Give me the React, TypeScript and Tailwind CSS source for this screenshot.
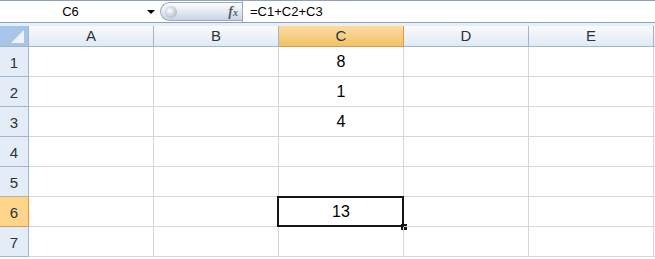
import React from "react";

const cols = ["A", "B", "C", "D", "E"];
const rows = [1, 2, 3, 4, 5, 6, 7];
const values: Record<string, string> = { C1: "8", C2: "1", C3: "4", C6: "13" };

function FormulaBar() {
  return (
    <div className="flex h-[23px] border-t border-b border-[#8ea2bd] bg-white">
      <div className="relative flex w-[156px] items-center">
        <span className="w-[140px] pl-[1px] text-center text-[13px] text-black">C6</span>
        <span className="absolute left-[147px] top-[9px] h-0 w-0 border-x-[4px] border-t-[4px] border-x-transparent border-t-black" />
      </div>
      <div className="relative my-[1px] ml-[4px] flex w-[82px] items-center justify-end rounded-l-full border border-r-0 border-[#9aaac2] bg-gradient-to-b from-[#fbfcfe] via-[#e3e9f3] to-[#c8d4e6] pr-[4px]">
        <span className="absolute left-[4px] top-[3px] h-[12px] w-[12px] rounded-full bg-[radial-gradient(circle_at_40%_40%,#ffffff,#b9bfc9_70%)]" />
        <span className="font-['Liberation_Serif',serif] text-[14px] font-bold italic leading-none text-[#555d68]">
          f<span className="text-[10px]">x</span>
        </span>
      </div>
      <div className="flex flex-1 items-center border-l border-[#9aaac2] pl-[7px] text-[13px] text-black">=C1+C2+C3</div>
    </div>
  );
}

export default function App() {
  return (
    <div className="h-[259px] w-[655px] overflow-hidden bg-white font-['Liberation_Sans',Arial,sans-serif]">
      <FormulaBar />
      <div className="h-[3px] bg-[#e8eef6]" />
      <div className="grid grid-cols-[29px_repeat(5,125px)_1fr] grid-rows-[21px_repeat(7,30px)]">
        <div className="relative border-r border-b border-[#9eb6ce] bg-[#a9c4e9]">
          <div className="absolute bottom-[3px] right-[4px] h-0 w-0 border-b-[13px] border-l-[13px] border-b-[#eef3fa] border-l-transparent" />
        </div>
        {cols.map((c) =>
          c === "C" ? (
            <div
              key={c}
              className="flex items-center justify-center border-r border-b border-[#f29536] bg-gradient-to-b from-[#f9dba4] to-[#f2c366] text-[15px] text-[#27353f]"
            >
              {c}
            </div>
          ) : (
            <div
              key={c}
              className="flex items-center justify-center border-r border-b border-[#9eb6ce] bg-gradient-to-b from-[#f9fbfd] to-[#e1e9f4] text-[15px] text-[#27353f]"
            >
              {c}
            </div>
          )
        )}
        <div className="border-b border-[#9eb6ce] bg-gradient-to-b from-[#f9fbfd] to-[#e1e9f4]" />
        {rows.map((r) => (
          <React.Fragment key={r}>
            {r === 6 ? (
              <div className="flex items-end justify-center border-r border-b border-[#f29536] bg-[#ffd58b] pb-[2px] text-[15px] text-[#27353f]">
                {r}
              </div>
            ) : (
              <div className="flex items-end justify-center border-r border-b border-[#9eb6ce] bg-[#e4ecf7] pb-[2px] text-[15px] text-[#27353f]">
                {r}
              </div>
            )}
            {cols.map((c) => (
              <div
                key={c + r}
                className="relative flex items-center justify-center border-r border-b border-[#d0d7e5] text-[16px] text-black"
              >
                {values[c + r] ?? ""}
                {c === "C" && r === 6 && (
                  <>
                    <div className="absolute -left-[2px] -top-[1px] -right-[1px] -bottom-[1px] border-2 border-[#151515]" />
                    <div className="absolute -bottom-[4px] -right-[4px] h-[6px] w-[6px] bg-[#151515]" />
                  </>
                )}
              </div>
            ))}
            <div className="border-b border-[#d0d7e5]" />
          </React.Fragment>
        ))}
      </div>
    </div>
  );
}
